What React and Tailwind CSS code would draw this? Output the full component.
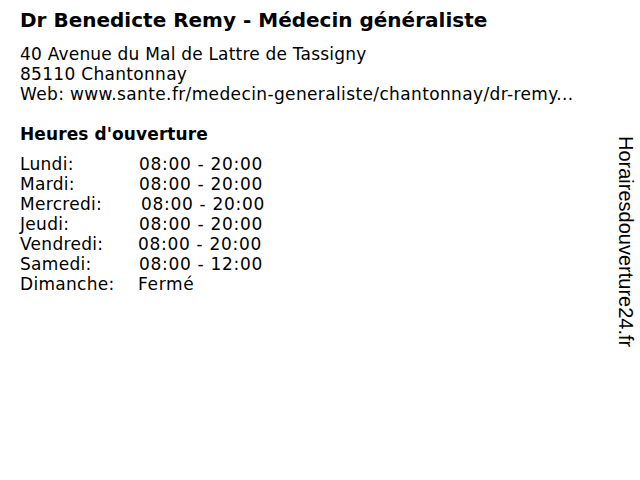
import React from 'react';

const hours = [
    { day: 'Lundi:', time: '08:00 - 20:00', nudge: '' },
    { day: 'Mardi:', time: '08:00 - 20:00', nudge: '' },
    { day: 'Mercredi:', time: '08:00 - 20:00', nudge: 'pl-[2px]' },
    { day: 'Jeudi:', time: '08:00 - 20:00', nudge: '' },
    { day: 'Vendredi:', time: '08:00 - 20:00', nudge: '-ml-px' },
    { day: 'Samedi:', time: '08:00 - 12:00', nudge: '' },
    { day: 'Dimanche:', time: 'Fermé', nudge: '-ml-px' },
];

const App = () => {
    return (
        <div className="w-[640px] h-[480px] bg-white text-black flex font-['DejaVu_Sans',sans-serif] overflow-hidden">
            {/* Main info */}
            <div className="flex-1 pl-5 pt-[6px]">
                <h1 className="text-[20px] leading-[28px] font-bold whitespace-nowrap">Dr Benedicte Remy - Médecin généraliste</h1>
                <div className="mt-[10px] text-[17px] leading-[20px] whitespace-nowrap tracking-[0.3px]">
                    <p className="tracking-[0.2px]">40 Avenue du Mal de Lattre de Tassigny</p>
                    <p>85110 Chantonnay</p>
                    <p className="tracking-[0.37px]">Web: www.sante.fr/medecin-generaliste/chantonnay/dr-remy...</p>
                </div>

                <h2 className="mt-[20px] text-[17px] leading-[20px] font-bold tracking-[0.1px]">Heures d'ouverture</h2>
                <div className="mt-[10px] text-[17px] leading-[20px]">
                    {hours.map((h) => (
                        <div key={h.day} className="flex">
                            <span className="w-[119px] shrink-0 tracking-[0.3px]">{h.day}</span>
                            <span className={`tracking-[0.7px] ${h.nudge}`}>{h.time}</span>
                        </div>
                    ))}
                </div>
            </div>

            {/* Vertical brand */}
            <div className="w-[26px] pr-[2px] pt-[136px] flex">
                <span className="[writing-mode:vertical-rl] font-['Liberation_Sans',sans-serif] text-[20px] leading-[24px] whitespace-nowrap">
                    Horairesdouverture24.fr
                </span>
            </div>
        </div>
    );
};

export default App;
